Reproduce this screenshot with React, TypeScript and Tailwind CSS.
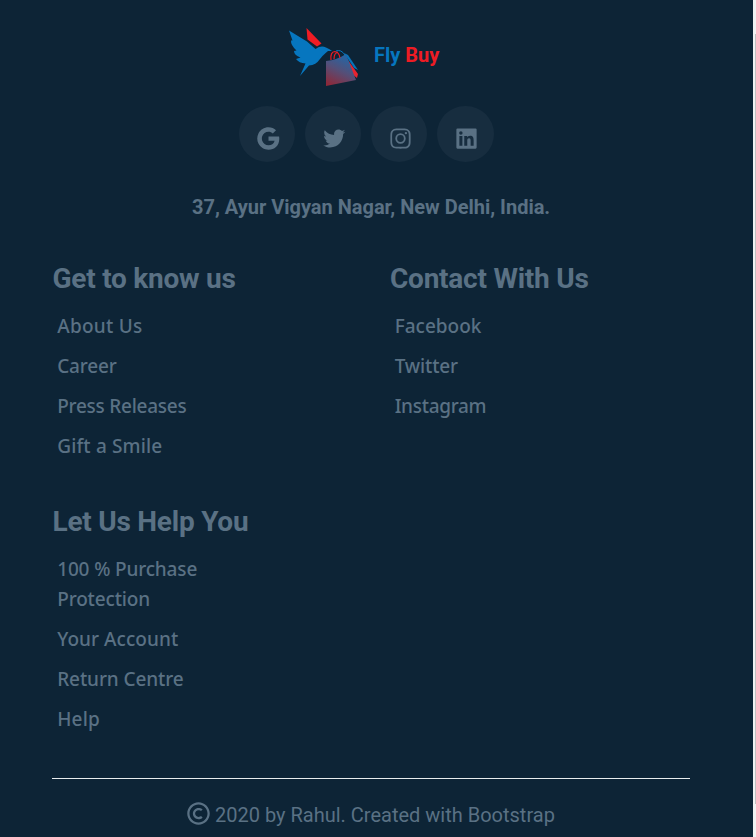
import { BiLogoTwitter, BiLogoInstagram, BiLogoLinkedinSquare, BiCopyright } from 'react-icons/bi';
import { RiGoogleFill } from 'react-icons/ri';

const socials = [RiGoogleFill, BiLogoTwitter, BiLogoInstagram, BiLogoLinkedinSquare];

function Logo() {
  return (
    <svg className="h-[60px] w-[72px] shrink-0" viewBox="0 0 72 60">
      <defs>
        <linearGradient id="bag" x1="0.65" y1="0" x2="0.2" y2="1">
          <stop offset="0" stopColor="#1f68aa" />
          <stop offset="0.5" stopColor="#544f78" />
          <stop offset="1" stopColor="#8c293a" />
        </linearGradient>
      </defs>
      <path d="M18.500 1L33.500 16.500L29 19.500L19.500 12.500Z" fill="#f01c24" />
      <path d="M1 3.500L19 14.500L27.500 22Q33 18 38 20.500Q42 22 44 24L40 24Q34 29 32 32Q28 38 21 38.500L12 49L17.500 36.500Q11 36 8 32L12.500 30.500Q6 28 6 24L8.500 23.500Q2.500 18 3 13.500L4.500 13.500Z" fill="#0676bf" />
      <path d="M56 26L60 28L70 43L66 41Z" fill="#0873b9" />
      <path d="M57 29L70 47L69 51L64 47Z" fill="#e82330" />
      <path d="M38 34Q49 33 58 27L68 53L38 59Z" fill="url(#bag)" />
      <path d="M43 33Q42 25 47 24.500Q51 25 52 31M46 32Q46 26 50 25" fill="none" stroke="#ed1c24" strokeWidth="1.200" />
      <path d="M48 24Q53 22 57 28" fill="none" stroke="#0676bf" strokeWidth="1" />
    </svg>
  );
}

type Item = { text: string; tracking?: string };

function Column({ title, items }: { title: string; items: Item[] }) {
  return (
    <section className="w-[337.5px]">
      <h2 className="mb-[16px] text-[28px] leading-[32px] font-bold tracking-[-0.24px]">{title}</h2>
      <ul className="ml-[4.7px] flex w-[170px] flex-col gap-[10px] font-['Noto_Sans',sans-serif] text-[19px] leading-[30px] font-medium">
        {items.map((item) => (
          <li key={item.text} className={item.tracking}>{item.text}</li>
        ))}
      </ul>
    </section>
  );
}

export default function App() {
  return (
    <div className="flex h-[837px] w-[756px] overflow-hidden bg-[#0d2436] font-['Roboto',sans-serif] text-[#5a7184]">
      <footer className="w-[753px] pt-[27px]">
        <div className="flex h-[60px] pl-[288px]">
          <Logo />
          <div className="ml-[14px] pt-[13px] text-[20px] leading-[30px] font-bold text-[#0676bf]">
            Fly <span className="text-[#ed1c24]">Buy</span>
          </div>
        </div>
        <div className="mt-[19px] flex gap-[10px] pl-[239px]">
          {socials.map((Icon, i) => (
            <div key={i} className="flex h-[56px] w-[56px] items-center justify-center rounded-full bg-[#172d3f] pt-[8px] pl-[2px] last:w-[57px] last:pl-[1px]">
              <Icon size={27} />
            </div>
          ))}
        </div>
        <div className="mt-[30px] pl-[192px] text-[20px] leading-[30px] font-bold tracking-[-0.015px]">37, Ayur Vigyan Nagar, New Delhi, India.</div>
        <div className="mt-[41px] flex flex-wrap gap-y-[45px] pl-[52.5px]">
          <Column
            title="Get to know us"
            items={[
              { text: 'About Us', tracking: 'tracking-[0.25px]' },
              { text: 'Career', tracking: 'tracking-[-0.17px]' },
              { text: 'Press Releases', tracking: 'tracking-[-0.25px]' },
              { text: 'Gift a Smile', tracking: 'tracking-[0.15px]' },
            ]}
          />
          <Column
            title="Contact With Us"
            items={[
              { text: 'Facebook' },
              { text: 'Twitter', tracking: 'tracking-[-0.15px]' },
              { text: 'Instagram', tracking: 'tracking-[-0.3px]' },
            ]}
          />
          <Column
            title="Let Us Help You"
            items={[
              { text: '100 % Purchase Protection', tracking: 'tracking-[-0.15px]' },
              { text: 'Your Account', tracking: 'tracking-[0.05px]' },
              { text: 'Return Centre', tracking: 'tracking-[-0.1px]' },
              { text: 'Help', tracking: 'tracking-[0.2px]' },
            ]}
          />
        </div>
        <div className="mt-[44px] ml-[52px] h-px w-[638px] bg-[#e8ecee]" />
        <div className="mt-[21px] flex pl-[185px] text-[20px] leading-[30px]">
          <BiCopyright size={27} />
          <span className="ml-[3px]">2020 by Rahul. Created with Bootstrap</span>
        </div>
      </footer>
      <div className="w-[3px] bg-[#f1f1f1] pt-[34px] pl-[2px]">
        <div className="h-[770px] w-px bg-[#c1c1c1]" />
      </div>
    </div>
  );
}
